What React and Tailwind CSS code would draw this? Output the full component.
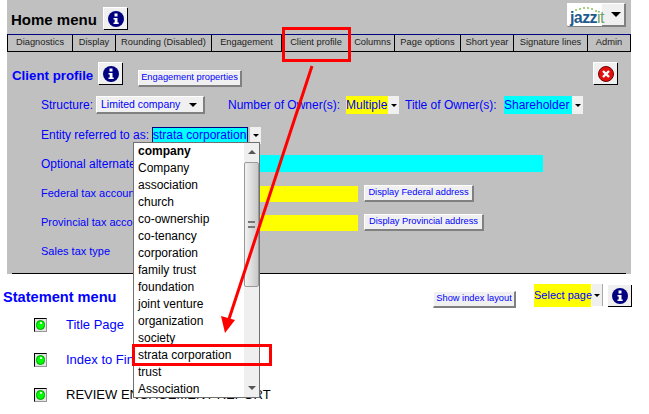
import React from "react";

const tabs = [
  { label: "Diagnostics", w: "w-[65px]" },
  { label: "Display", w: "w-[43px]" },
  { label: "Rounding (Disabled)", w: "w-[96px]" },
  { label: "Engagement", w: "w-[70px]" },
  { label: "Client profile", w: "w-[69px]" },
  { label: "Columns", w: "w-[44px]" },
  { label: "Page options", w: "w-[66px]" },
  { label: "Short year", w: "w-[53px]" },
  { label: "Signature lines", w: "w-[74px]" },
  { label: "Admin", w: "w-[43px]" },
];

const entities = [
  "company",
  "Company",
  "association",
  "church",
  "co-ownership",
  "co-tenancy",
  "corporation",
  "family trust",
  "foundation",
  "joint venture",
  "organization",
  "society",
  "strata corporation",
  "trust",
  "Association",
];

const InfoIcon = () => (
  <svg width="16" height="16" viewBox="0 0 16 16">
    <circle cx="8" cy="8" r="8" fill="#000080" />
    <rect x="6.5" y="2.5" width="3" height="3" fill="#fff" />
    <path d="M5.5 7h4v4.5h1.2V13H5.5v-1.5h1.2V8.5H5.5z" fill="#fff" />
  </svg>
);

const IconButton = ({ children, className = "" }) => (
  <div
    className={`flex h-[22px] w-[24px] items-center justify-center border-t border-l border-t-white border-l-white bg-[#f0f0f0] shadow-[1px_1px_0_#000] ${className}`}
  >
    {children}
  </div>
);

const SmallButton = ({ children, className = "" }) => (
  <div
    className={`flex h-[17px] items-center justify-center whitespace-nowrap border-t border-l border-r-2 border-b-2 border-t-white border-l-white border-r-[#808080] border-b-[#808080] bg-[#f0f0f0] text-[9.3px] leading-none text-[#0000ff] ${className}`}
  >
    {children}
  </div>
);

const ArrowBox = ({ className = "" }) => (
  <div className={`flex h-[17px] w-[11px] items-center justify-center bg-[#f0f0f0] ${className}`}>
    <div className="h-0 w-0 border-x-[3px] border-t-[3px] border-x-transparent border-t-black" />
  </div>
);

const Bullet = () => (
  <div className="flex h-[14px] w-[13px] items-center justify-center border border-t-black border-l-black border-r-[#999] border-b-[#999] bg-[#e4e4e4]">
    <div className="relative h-[10px] w-[9px] rounded-full border border-[#00a000] bg-[#00ff00]">
      <div className="absolute left-[3px] top-[1px] h-[2px] w-[2px] bg-[#d8ffd8]" />
    </div>
  </div>
);

export default function App() {
  return (
    <div className="relative h-[414px] w-[649px] overflow-hidden bg-white font-['Liberation_Sans',Arial,sans-serif]">
      {/* panel */}
      <div className="ml-[7px] flex h-[274px] w-[624px] flex-col bg-[#c0c0c0]">
        <div className="flex h-[34px] items-start">
          <span className="ml-[4px] mt-[11px] w-[84px] whitespace-nowrap text-[15px] font-bold leading-[18px] text-black">Home menu</span>
          <IconButton className="ml-[8px] mt-[7px]">
            <InfoIcon />
          </IconButton>
          <div className="ml-auto mr-[5px] mt-[3px] flex h-[24px] w-[59px] items-center border-t border-l border-r-2 border-b-2 border-t-white border-l-white border-r-[#808080] border-b-[#808080] bg-[#f0f0f0]">
            <div className="relative h-[22px] w-[34px] bg-white">
              <svg className="absolute left-[3px] top-[1px]" width="28" height="8" viewBox="0 0 28 8">
                {[[1, 7], [5, 5], [9, 4], [13, 3], [17, 3], [21, 4], [25, 6]].map(([x, y]) => (
                  <circle key={x} cx={x} cy={y} r="1" fill="#8cc152" />
                ))}
              </svg>
              <span className="absolute left-[2px] top-[6px] text-[16px] font-bold leading-[16px] tracking-[-0.6px] text-[#1f5a8c]">
                jazz<span className="font-normal text-[#6f9f6a]">it</span>
              </span>
            </div>
            <div className="ml-[9px] h-0 w-0 border-x-[5px] border-t-[5px] border-x-transparent border-t-black" />
          </div>
        </div>

        {/* tabs */}
        <div className="flex h-[18px] w-[624px] border-y border-l border-t-[#000080] border-b-black border-l-black">
          {tabs.map((t) => (
            <div
              key={t.label}
              className={`flex items-center justify-center whitespace-nowrap border-r border-r-black text-[9.3px] leading-none text-[#222] ${t.w}`}
            >
              {t.label}
            </div>
          ))}
        </div>

        {/* client profile head */}
        <div className="mt-[10px] flex h-[24px] items-start">
          <span className="ml-[5px] mt-[5px] w-[81px] whitespace-nowrap text-[13.3px] font-bold leading-[18px] text-[#0000ff]">Client profile</span>
          <IconButton className="ml-[5px]">
            <InfoIcon />
          </IconButton>
          <SmallButton className="ml-[16px] mt-[8px] w-[104px]">Engagement properties</SmallButton>
          <IconButton className="ml-auto mr-[14px]">
            <svg width="16" height="16" viewBox="0 0 16 16">
              <circle cx="8" cy="8" r="7.5" fill="#e01010" stroke="#700" strokeWidth="1" />
              <path d="M5 5l6 6M11 5l-6 6" stroke="#fff" strokeWidth="2.4" />
            </svg>
          </IconButton>
        </div>

        {/* structure */}
        <div className="mt-[10px] flex h-[18px] items-center text-[12px] text-[#0000ff]">
          <span className="ml-[34px] w-[55px]">Structure:</span>
          <div className="flex h-[18px] w-[109px] items-center justify-between border-t border-l border-r-2 border-b-2 border-t-white border-l-white border-r-[#808080] border-b-[#808080] bg-[#f0f0f0] pl-[4px] pr-[6px] text-[10.5px]">
            Limited company
            <div className="h-0 w-0 border-x-[4px] border-t-[4px] border-x-transparent border-t-black" />
          </div>
          <span className="ml-[23px] w-[118px]">Number of Owner(s):</span>
          <div className="flex h-[18px] w-[42px] items-center bg-[#ffff00]">Multiple</div>
          <ArrowBox className="h-[18px]" />
          <span className="ml-[6px] w-[99px]">Title of Owner(s):</span>
          <div className="flex h-[18px] w-[68px] items-center bg-[#00ffff]">Shareholder</div>
          <ArrowBox className="h-[18px]" />
        </div>

        {/* entity */}
        <div className="mt-[13px] flex h-[16px] items-center text-[12px] text-[#0000ff]">
          <span className="ml-[34px] w-[111px]">Entity referred to as:</span>
          <div className="flex h-[16px] w-[96px] items-center whitespace-nowrap border border-[#000080] bg-[#00ffff]">strata corporation</div>
          <ArrowBox className="ml-[2px] h-[16px]" />
        </div>

        {/* optional */}
        <div className="mt-[12px] flex h-[17px] items-center text-[12px] text-[#0000ff]">
          <span className="ml-[34px] w-[189px] whitespace-nowrap">Optional alternate</span>
          <div className="h-[17px] w-[313px] bg-[#00ffff]" />
        </div>

        {/* federal */}
        <div className="mt-[13px] flex h-[17px] items-center text-[11px] text-[#0000ff]">
          <span className="ml-[34px] w-[189px] whitespace-nowrap">Federal tax account</span>
          <div className="h-[16px] w-[128px] bg-[#ffff00]" />
          <SmallButton className="ml-[6px] w-[110px]">Display Federal address</SmallButton>
        </div>

        {/* provincial */}
        <div className="mt-[12px] flex h-[17px] items-center text-[11px] text-[#0000ff]">
          <span className="ml-[34px] w-[189px] whitespace-nowrap">Provincial tax account</span>
          <div className="h-[16px] w-[128px] bg-[#ffff00]" />
          <SmallButton className="ml-[6px] w-[120px]">Display Provincial address</SmallButton>
        </div>

        <div className="ml-[34px] mt-[13px] text-[11px] leading-[14px] text-[#0000ff]">Sales tax type</div>
        <div className="ml-[5px] mt-auto h-[1px] w-[614px] bg-black" />
      </div>

      {/* statement menu */}
      <div className="mt-[10px] flex h-[24px] items-start">
        <span className="ml-[3px] mt-[5px] w-[430px] whitespace-nowrap text-[14.6px] font-bold leading-[16px] text-[#0000ff]">Statement menu</span>
        <SmallButton className="mt-[7px] w-[83px]">Show index layout</SmallButton>
        <div className="ml-[18px] flex h-[23px] w-[57px] items-center whitespace-nowrap bg-[#ffff00] text-[11px] text-[#0000ff]">Select page</div>
        <ArrowBox className="ml-[1px] h-[22px] border-r border-r-[#aaa]" />
        <IconButton className="ml-[4px]">
          <InfoIcon />
        </IconButton>
      </div>

      <div className="ml-[34px] mt-[9px] flex h-[16px] items-center">
        <Bullet />
        <span className="ml-[19px] text-[13px] text-[#0000ff]">Title Page</span>
      </div>
      <div className="ml-[34px] mt-[19px] flex h-[16px] items-center">
        <Bullet />
        <span className="ml-[19px] text-[13px] text-[#0000ff]">Index to Financial Statements</span>
      </div>
      <div className="ml-[34px] mt-[19px] flex h-[16px] items-center">
        <Bullet />
        <span className="ml-[19px] text-[13px] text-black">REVIEW ENGAGEMENT REPORT</span>
      </div>

      {/* open dropdown list */}
      <div className="absolute left-[133px] top-[142px] flex h-[256px] w-[127px] border border-[#707070] bg-white">
        <div className="w-[110px] text-[12px] leading-[17px] text-black">
          {entities.map((name, i) => (
            <div key={name} className={`h-[17px] pl-[4px] ${i === 0 ? "font-bold" : ""}`}>
              {name}
            </div>
          ))}
        </div>
        <div className="relative w-[15px] bg-[#efefef]">
          <div className="absolute left-[4px] top-[7px] h-0 w-0 border-x-[4px] border-b-[4px] border-x-transparent border-b-[#555]" />
          <div className="absolute left-0 top-[19px] flex h-[125px] w-[15px] items-center justify-center rounded-[2px] border border-[#999] bg-gradient-to-r from-[#f2f2f2] to-[#c8c8c8]">
            <div className="h-[7px] w-[7px] border-y-2 border-[#777]" />
          </div>
          <div className="absolute bottom-[7px] left-[4px] h-0 w-0 border-x-[4px] border-t-[4px] border-x-transparent border-t-[#555]" />
        </div>
      </div>

      {/* red annotations */}
      <div className="absolute left-[282px] top-[27px] h-[35px] w-[69px] border-[3px] border-[#ff0000]" />
      <div className="absolute left-[132px] top-[344px] h-[22px] w-[140px] border-[3px] border-[#ff0000]" />
      <svg className="absolute left-0 top-0" width="649" height="414" viewBox="0 0 649 414">
        <line x1="312" y1="66" x2="228" y2="322" stroke="#ff0000" strokeWidth="3" />
        <polygon points="225,333 221,316 235,320" fill="#ff0000" />
      </svg>
    </div>
  );
}
